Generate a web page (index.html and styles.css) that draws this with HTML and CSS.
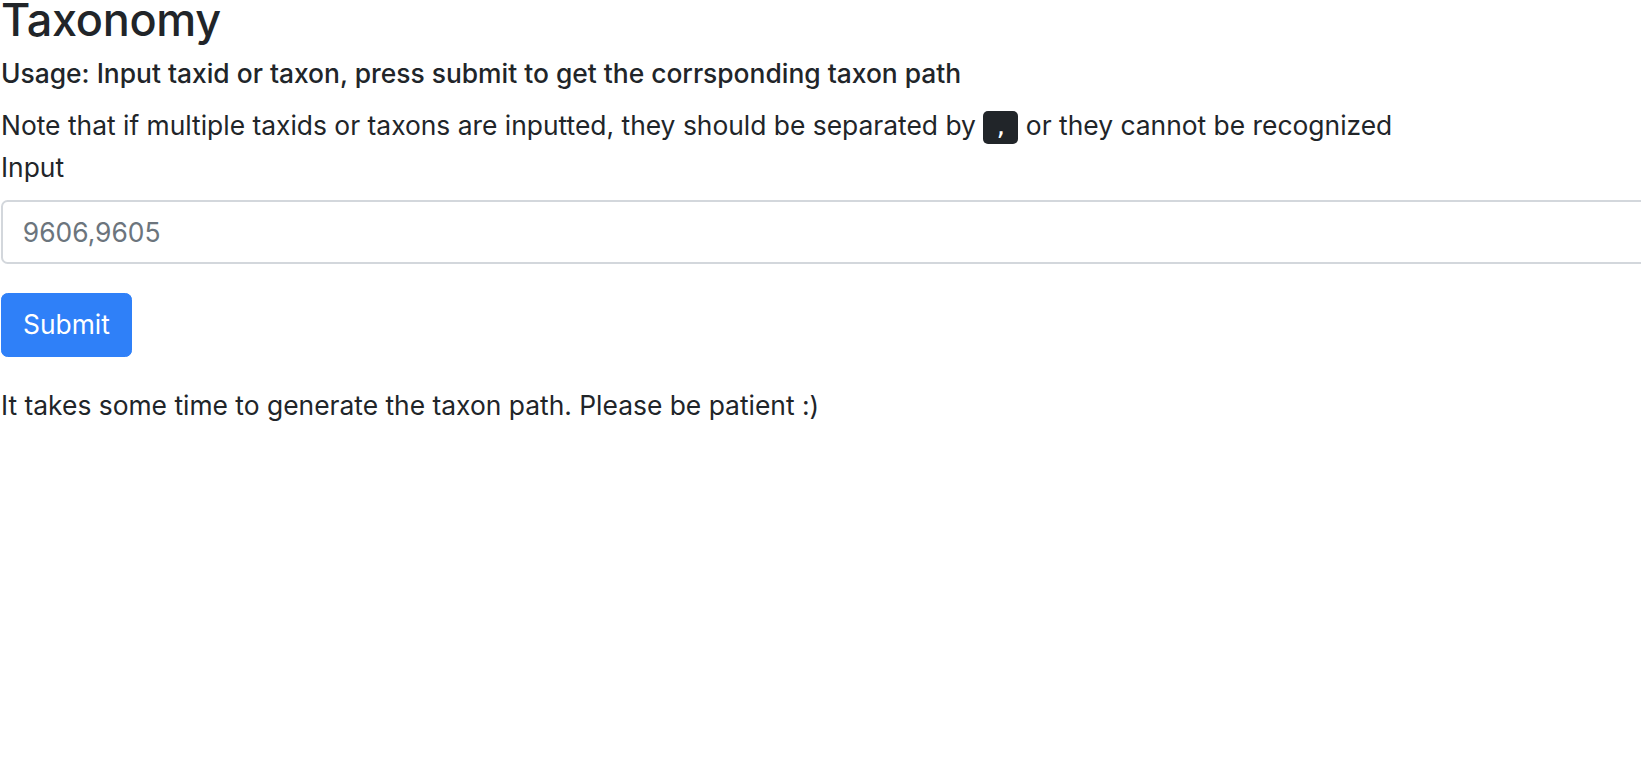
FILE: index.html
```html
<!DOCTYPE html>
<html lang="en">
<head>
<meta charset="utf-8">
<title>Taxonomy</title>
<link rel="stylesheet" href="styles.css">
</head>
<body>
<main class="page">
  <h2 class="title">Taxonomy</h2>
  <h6 class="usage">Usage: Input taxid or taxon, press submit to get the corrsponding taxon path</h6>
  <p class="note">Note that if multiple taxids or taxons are inputted, they should be separated by <kbd class="key">,</kbd> or they cannot be recognized</p>
  <form class="form">
    <div class="form-group">
      <label class="label" for="taxid">Input</label>
      <input class="form-control" id="taxid" type="text" placeholder="9606,9605">
    </div>
    <button class="btn" type="button">Submit</button>
  </form>
  <p class="hint">It takes some time to generate the taxon path. Please be patient :)</p>
</main>
</body>
</html>
```

FILE: styles.css
```css
html {
  overflow: hidden;
}
body {
  margin: 0;
  background: #fff;
  color: #212529;
  font-family: Inter, "Noto Sans", "Liberation Sans", sans-serif;
  font-size: 26.4px;
  line-height: 1.5;
}
.page {
  padding-left: 1px;
  margin-top: -7px;
}
.title {
  margin: 0 0 11.2px;
  font-size: 45px;
  font-weight: 500;
  line-height: 1.2;
  letter-spacing: -0.3px;
}
.usage {
  margin: 0 0 16px;
  font-size: 26.4px;
  font-weight: 500;
  line-height: 1.2;
}
.note {
  margin: 0 0 3px;
}
.key {
  display: inline-block;
  padding: 4px 10.6px;
  font-family: "DejaVu Sans Mono", "Liberation Mono", monospace;
  font-size: 23.1px;
  line-height: 1.1;
  color: #fff;
  background: #212529;
  border-radius: 5px;
  vertical-align: 0;
}
.form {
  margin: 0;
}
.form-group {
  margin-bottom: 29px;
}
.label {
  display: inline-block;
  margin-bottom: 11.5px;
}
.form-control {
  display: block;
  box-sizing: border-box;
  width: 1760px;
  height: 64px;
  margin: 0;
  padding: 9.9px 19.8px;
  font-family: inherit;
  font-size: 26.4px;
  line-height: 1.5;
  color: #495057;
  background: #fff;
  border: 2px solid #d3d7dc;
  border-radius: 6.6px;
}
.form-control::placeholder {
  color: #6c757d;
  opacity: 1;
}
.btn {
  display: block;
  box-sizing: border-box;
  height: 64px;
  padding: 9.9px 21px;
  font-family: inherit;
  font-size: 26.4px;
  font-weight: 400;
  line-height: 1.5;
  color: #fff;
  background: #2f80f8;
  border: 1px solid #2f80f8;
  border-radius: 6.6px;
}
.hint {
  margin: 29px 0 0;
}
```
